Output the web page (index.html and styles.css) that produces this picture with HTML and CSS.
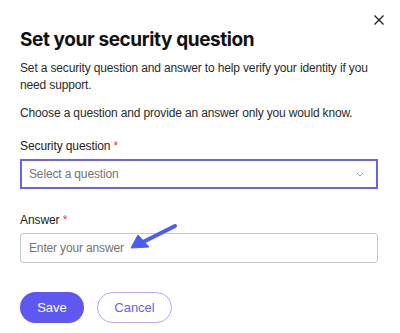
FILE: index.html
```html
<!DOCTYPE html>
<html>
<head>
<meta charset="utf-8">
<link rel="stylesheet" href="styles.css">
</head>
<body>
<div class="dialog">
  <button class="close" aria-label="Close">
    <svg width="12" height="12" viewBox="0 0 12 12"><path d="M1.5 1.5L10.5 10.5M10.5 1.5L1.5 10.5" stroke="#222" stroke-width="1.4" fill="none"/></svg>
  </button>
  <h1 class="title">Set your security question</h1>
  <p class="text">Set a security question and answer to help verify your identity if you need support.</p>
  <p class="text second">Choose a question and provide an answer only you would know.</p>
  <div class="field">
    <label class="label">Security question <span class="req">*</span></label>
    <div class="select">
      <span class="placeholder">Select a question</span>
      <svg class="chev" width="8" height="5" viewBox="0 0 8 5"><path d="M1 1L4 4L7 1" stroke="#999" stroke-width="1" fill="none"/></svg>
    </div>
  </div>
  <div class="field answer">
    <label class="label">Answer <span class="req">*</span></label>
    <div class="input-wrap">
      <div class="input"><span class="placeholder">Enter your answer</span></div>
      <svg class="arrow" width="60" height="40" viewBox="0 0 60 40"><path d="M53 5L21 21" stroke="#4a5cf5" stroke-width="4" stroke-linecap="round" fill="none"/><path d="M9 27L16 14L27 26Z" fill="#4a5cf5" stroke="#4a5cf5" stroke-width="1" stroke-linejoin="round"/></svg>
    </div>
  </div>
  <div class="actions">
    <button class="btn primary">Save</button>
    <button class="btn secondary">Cancel</button>
  </div>
</div>
</body>
</html>
```
FILE: styles.css
```css
* { box-sizing: border-box; }
html, body { margin: 0; padding: 0; background: #fff; }
body { font-family: "Liberation Sans", Arial, sans-serif; color: #222; }
.dialog { position: relative; width: 400px; height: 333px; padding: 28px 16px 0 20px; }
.close { position: absolute; top: 13px; right: 14px; width: 14px; height: 14px; padding: 0; border: 0; background: none; display: flex; align-items: center; justify-content: center; }
.title { margin: 0; font-family: Inter, "Liberation Sans", sans-serif; font-size: 19px; font-weight: 700; letter-spacing: -0.4px; line-height: 24px; color: #111; }
.text { margin: 8px 0 0; font-size: 12px; letter-spacing: -0.15px; line-height: 17px; color: #2a2a2a; }
.text.second { margin-top: 11px; }
.field { margin-top: 16px; width: 358px; }
.label { display: block; font-size: 12px; letter-spacing: -0.1px; line-height: 16px; color: #222; margin-bottom: 5px; }
.req { color: #e0434b; }
.select { height: 30px; border: 2px solid #6a62ee; display: flex; align-items: center; justify-content: space-between; padding: 0 12px 0 7px; }
.placeholder { font-size: 12px; letter-spacing: -0.15px; color: #737373; }
.answer { margin-top: 23px; }
.input-wrap { position: relative; }
.input { height: 30px; border: 1px solid #c8c8c8; border-radius: 3px; display: flex; align-items: center; padding: 0 8px; }
.arrow { position: absolute; left: 102px; top: -12px; }
.actions { margin-top: 29px; display: flex; gap: 13px; }
.btn { height: 31px; border-radius: 16px; font-family: "Liberation Sans", Arial, sans-serif; font-size: 13px; padding: 0; }
.primary { width: 64px; background: #5e58f0; color: #fff; border: 0; }
.secondary { width: 75px; background: #fff; color: #6a62ee; border: 1px solid #b0acf5; }
```
